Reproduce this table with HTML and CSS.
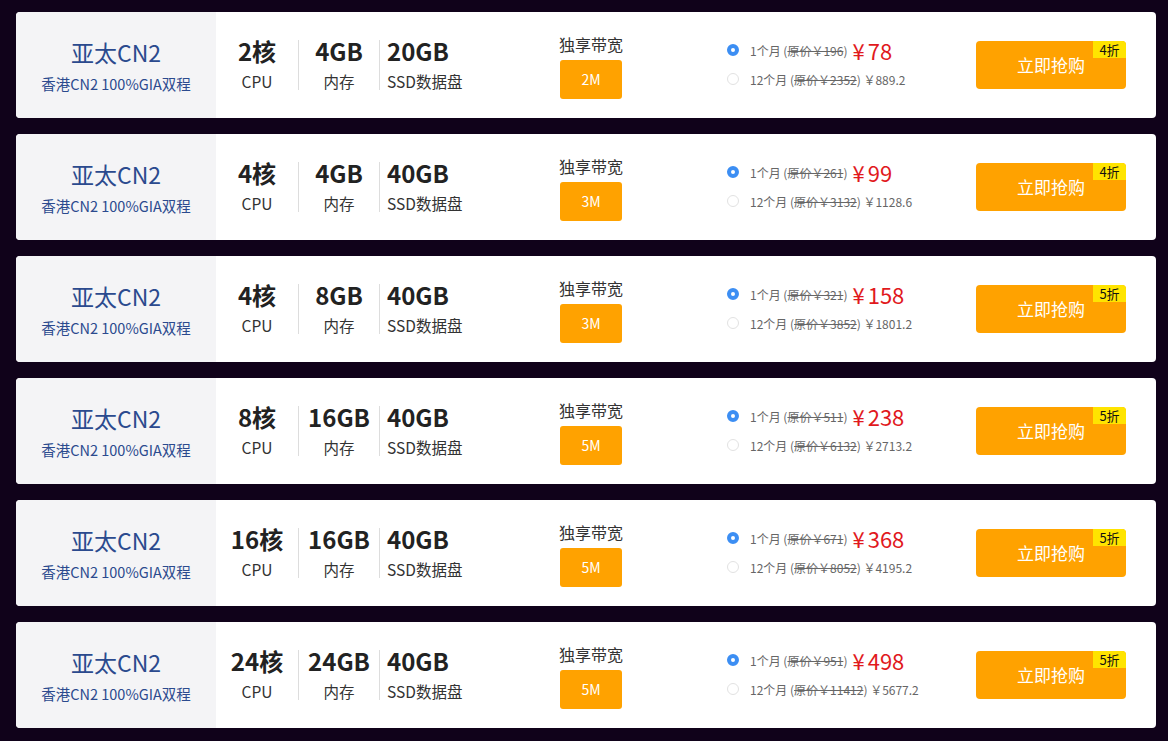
FILE: index.html
```html
<!DOCTYPE html>
<html lang="zh-CN">
<head>
<meta charset="utf-8">
<title>亚太CN2</title>
<link rel="stylesheet" href="styles.css">
</head>
<body>
<div class="list">
  <div class="card">
    <div class="name"><div class="title">亚太CN2</div><div class="sub">香港CN2 100%GIA双程</div></div>
    <div class="spec cpu"><div class="num">2核</div><div class="lbl">CPU</div></div>
    <div class="spec ram"><div class="num">4GB</div><div class="lbl">内存</div></div>
    <div class="spec ssd"><div class="num">20GB</div><div class="lbl">SSD数据盘</div></div>
    <div class="bw"><div class="bw-lbl">独享带宽</div><div class="bw-val">2M</div></div>
    <div class="price">
      <div class="opt"><span class="radio on"></span><span class="pl">1个月 (<s>原价￥196</s>)</span><span class="big"><span class="cur">¥</span>78</span></div>
      <div class="opt"><span class="radio"></span><span class="pl">12个月 (<s>原价￥2352</s>) ￥889.2</span></div>
    </div>
    <div class="buy">立即抢购<span class="badge">4折</span></div>
  </div>
  <div class="card">
    <div class="name"><div class="title">亚太CN2</div><div class="sub">香港CN2 100%GIA双程</div></div>
    <div class="spec cpu"><div class="num">4核</div><div class="lbl">CPU</div></div>
    <div class="spec ram"><div class="num">4GB</div><div class="lbl">内存</div></div>
    <div class="spec ssd"><div class="num">40GB</div><div class="lbl">SSD数据盘</div></div>
    <div class="bw"><div class="bw-lbl">独享带宽</div><div class="bw-val">3M</div></div>
    <div class="price">
      <div class="opt"><span class="radio on"></span><span class="pl">1个月 (<s>原价￥261</s>)</span><span class="big"><span class="cur">¥</span>99</span></div>
      <div class="opt"><span class="radio"></span><span class="pl">12个月 (<s>原价￥3132</s>) ￥1128.6</span></div>
    </div>
    <div class="buy">立即抢购<span class="badge">4折</span></div>
  </div>
  <div class="card">
    <div class="name"><div class="title">亚太CN2</div><div class="sub">香港CN2 100%GIA双程</div></div>
    <div class="spec cpu"><div class="num">4核</div><div class="lbl">CPU</div></div>
    <div class="spec ram"><div class="num">8GB</div><div class="lbl">内存</div></div>
    <div class="spec ssd"><div class="num">40GB</div><div class="lbl">SSD数据盘</div></div>
    <div class="bw"><div class="bw-lbl">独享带宽</div><div class="bw-val">3M</div></div>
    <div class="price">
      <div class="opt"><span class="radio on"></span><span class="pl">1个月 (<s>原价￥321</s>)</span><span class="big"><span class="cur">¥</span>158</span></div>
      <div class="opt"><span class="radio"></span><span class="pl">12个月 (<s>原价￥3852</s>) ￥1801.2</span></div>
    </div>
    <div class="buy">立即抢购<span class="badge">5折</span></div>
  </div>
  <div class="card">
    <div class="name"><div class="title">亚太CN2</div><div class="sub">香港CN2 100%GIA双程</div></div>
    <div class="spec cpu"><div class="num">8核</div><div class="lbl">CPU</div></div>
    <div class="spec ram"><div class="num">16GB</div><div class="lbl">内存</div></div>
    <div class="spec ssd"><div class="num">40GB</div><div class="lbl">SSD数据盘</div></div>
    <div class="bw"><div class="bw-lbl">独享带宽</div><div class="bw-val">5M</div></div>
    <div class="price">
      <div class="opt"><span class="radio on"></span><span class="pl">1个月 (<s>原价￥511</s>)</span><span class="big"><span class="cur">¥</span>238</span></div>
      <div class="opt"><span class="radio"></span><span class="pl">12个月 (<s>原价￥6132</s>) ￥2713.2</span></div>
    </div>
    <div class="buy">立即抢购<span class="badge">5折</span></div>
  </div>
  <div class="card">
    <div class="name"><div class="title">亚太CN2</div><div class="sub">香港CN2 100%GIA双程</div></div>
    <div class="spec cpu"><div class="num">16核</div><div class="lbl">CPU</div></div>
    <div class="spec ram"><div class="num">16GB</div><div class="lbl">内存</div></div>
    <div class="spec ssd"><div class="num">40GB</div><div class="lbl">SSD数据盘</div></div>
    <div class="bw"><div class="bw-lbl">独享带宽</div><div class="bw-val">5M</div></div>
    <div class="price">
      <div class="opt"><span class="radio on"></span><span class="pl">1个月 (<s>原价￥671</s>)</span><span class="big"><span class="cur">¥</span>368</span></div>
      <div class="opt"><span class="radio"></span><span class="pl">12个月 (<s>原价￥8052</s>) ￥4195.2</span></div>
    </div>
    <div class="buy">立即抢购<span class="badge">5折</span></div>
  </div>
  <div class="card">
    <div class="name"><div class="title">亚太CN2</div><div class="sub">香港CN2 100%GIA双程</div></div>
    <div class="spec cpu"><div class="num">24核</div><div class="lbl">CPU</div></div>
    <div class="spec ram"><div class="num">24GB</div><div class="lbl">内存</div></div>
    <div class="spec ssd"><div class="num">40GB</div><div class="lbl">SSD数据盘</div></div>
    <div class="bw"><div class="bw-lbl">独享带宽</div><div class="bw-val">5M</div></div>
    <div class="price">
      <div class="opt"><span class="radio on"></span><span class="pl">1个月 (<s>原价￥951</s>)</span><span class="big"><span class="cur">¥</span>498</span></div>
      <div class="opt"><span class="radio"></span><span class="pl">12个月 (<s>原价￥11412</s>) ￥5677.2</span></div>
    </div>
    <div class="buy">立即抢购<span class="badge">5折</span></div>
  </div>
</div>
</body>
</html>
```
FILE: styles.css
```css
html, body {
  margin: 0;
  padding: 0;
  background: #10021a;
  font-family: "Noto Sans CJK SC", "Noto Sans", sans-serif;
}
.list {
  display: flex;
  flex-direction: column;
  gap: 16px;
  padding: 12px 12px 13px 16px;
}
.card {
  width: 1140px;
  height: 106px;
  background: #fff;
  border-radius: 4px;
  overflow: hidden;
  display: flex;
  align-items: center;
}
.name {
  width: 200px;
  height: 100%;
  background: #f4f4f6;
  display: flex;
  flex-direction: column;
  align-items: center;
  justify-content: center;
  gap: 8px;
  padding-top: 1px;
  box-sizing: border-box;
}
.title {
  font-size: 23px;
  line-height: 28px;
  color: #2b4a8e;
}
.sub {
  font-size: 14.5px;
  line-height: 20px;
  color: #2b4a8e;
}
.spec {
  display: flex;
  flex-direction: column;
  align-items: center;
  height: 50px;
  justify-content: flex-start;
}
.cpu { width: 82px; }
.ram { width: 80px; border-left: 1px solid #ddd; }
.ssd {
  width: 93px;
  border-left: 1px solid #ddd;
  align-items: flex-start;
  padding-left: 7px;
  box-sizing: border-box;
}
.num {
  font-size: 24px;
  font-weight: 700;
  line-height: 28px;
  color: #222;
  margin-top: -3px;
}
.lbl {
  font-size: 15.5px;
  line-height: 20px;
  color: #333;
  margin-top: 6px;
}
.bw {
  width: 238px;
  display: flex;
  flex-direction: column;
  align-items: center;
  gap: 6px;
  margin-top: 3px;
}
.bw-lbl {
  font-size: 16px;
  line-height: 20px;
  color: #333;
}
.bw-val {
  width: 62px;
  height: 39px;
  background: #ffa200;
  border-radius: 3px;
  color: #fff;
  font-size: 14px;
  line-height: 39px;
  text-align: center;
}
.price {
  width: 266px;
  box-sizing: border-box;
  padding-left: 17px;
  display: flex;
  flex-direction: column;
  gap: 4px;
  margin-top: -1px;
}
.opt {
  display: flex;
  align-items: center;
  height: 25px;
}
.radio {
  width: 12px;
  height: 12px;
  border-radius: 50%;
  border: 1px solid #e2e2e2;
  box-sizing: border-box;
  margin-right: 11px;
  background: #fff;
  flex: none;
}
.radio.on {
  border: 4px solid #3c8ef3;
  background: #fff;
}
.pl {
  font-size: 12px;
  color: #666;
  white-space: pre;
}
.pl s {
  text-decoration-thickness: 1px;
}
.big {
  font-size: 22px;
  color: #e1191d;
  margin-left: 5px;
  line-height: 25px;
}
.cur {
  margin-right: 3px;
}
.buy {
  position: relative;
  width: 150px;
  height: 48px;
  background: #ffa200;
  border-radius: 4px;
  color: #fff;
  font-size: 17px;
  line-height: 48px;
  text-align: center;
}
.badge {
  position: absolute;
  top: 0;
  right: 0;
  width: 33px;
  height: 17px;
  background: #ffe400;
  color: #111;
  font-size: 13px;
  line-height: 17px;
  text-align: center;
  border-top-right-radius: 4px;
}
```
